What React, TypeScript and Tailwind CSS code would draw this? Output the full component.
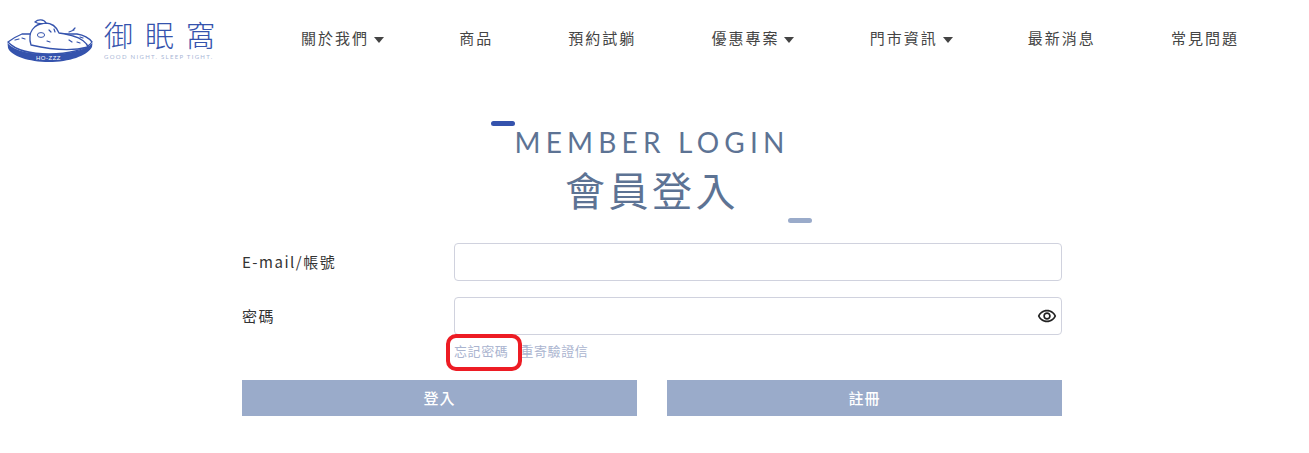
import React from "react";
import { MdOutlineRemoveRedEye } from "react-icons/md";

const font = "font-['Noto_Sans_CJK_TC','Noto_Sans',sans-serif]";

const NavItems = [
  { id: 1, title: "關於我們", caret: true },
  { id: 2, title: "商品", caret: false },
  { id: 3, title: "預約試躺", caret: false },
  { id: 4, title: "優惠專案", caret: true },
  { id: 5, title: "門市資訊", caret: true },
  { id: 6, title: "最新消息", caret: false },
  { id: 7, title: "常見問題", caret: false },
];

const Logo: React.FC = () => (
  <div className="flex items-start w-[207px] h-[48px]">
    <svg width="86" height="46" viewBox="0 0 86 46" fill="none" className="shrink-0">
      {/* bed */}
      <path d="M1 24 C5 21 10 18 15 16 L70 16 C76 17 82 20 85 24 C80 32 60 36 42 36 C24 36 8 32 1 24 Z" fill="#fff" stroke="#3553ad" strokeWidth="1.3" />
      <path d="M0.5 25 C8 34 26 36 42 36 C60 36 78 33 85.5 25 L85 29 C80 38 62 44 42 44 C22 44 4 38 1 30 Z" fill="#3553ad" />
      {/* pig */}
      <path d="M24 27 C20 14 27 6 38 5 C46 5 50 10 52 15 C60 16 64 18 66 18 C74 20 80 25 81 29 C66 33 46 32 24 27 Z" fill="#fff" stroke="#3553ad" strokeWidth="1.3" />
      <path d="M28 4 C31 1 37 1 39 5 C35 6 31 6 28 4 Z" fill="#fff" stroke="#3553ad" strokeWidth="1.2" />
      <ellipse cx="34" cy="17" rx="3.6" ry="2.4" stroke="#3553ad" strokeWidth="1" />
      <path d="M42 12 l2 2 M47 11 l1 3 M40 23 l3 1 M62 22 l3 2 M70 24 l3 1 M8 22 l4 -1 M15 20 l3 1 M73 19 l3 1 M62 14 l5 -2 M66 12 l2 -2" stroke="#3553ad" strokeWidth="1.2" strokeLinecap="round" />
      <text x="29" y="42" fontSize="6" fill="#fff" fontFamily="Liberation Sans" letterSpacing="0.5">HO-ZZZ</text>
    </svg>
    <div className="ml-[11px] flex flex-col">
      <span className={`${font} text-[29px] leading-[32px] text-[#3553ad] font-light tracking-[12px] whitespace-nowrap`}>御眠窩</span>
      <span className="font-['Lato',sans-serif] text-[6px] leading-[8px] text-[#a9b6d6] tracking-[1.3px] whitespace-nowrap mt-[3px]">GOOD NIGHT. SLEEP TIGHT.</span>
    </div>
  </div>
);

const Field: React.FC<{ label: string; eye?: boolean }> = ({ label, eye }) => (
  <div className="flex items-center h-[38px]">
    <label className={`${font} w-[212px] shrink-0 text-[15px] tracking-[1.5px] text-[#333]`}>{label}</label>
    <div className="relative flex-1 h-full">
      <input className="w-full h-full rounded border border-[#d0d2de] bg-white px-3 outline-none" />
      {eye && <MdOutlineRemoveRedEye className="absolute right-[5px] top-[9px] text-[#222]" size={20} />}
    </div>
  </div>
);

const App: React.FC = () => {
  return (
    <div className={`${font} w-[1309px] h-[453px] bg-white overflow-hidden`}>
      <header className="flex items-start pt-[18px] pl-[7px] h-[76px]">
        <Logo />
        <nav className="flex justify-between w-[938px] ml-[87px] mt-[9px]">
          {NavItems.map(({ id, title, caret }) => (
            <a key={id} href="#" className="flex items-center text-[15px] leading-[22px] tracking-[2px] text-[#444] whitespace-nowrap">
              {title}
              {caret && <span className="ml-[5px] mt-[4px] border-x-[5px] border-t-[6px] border-x-transparent border-t-[#444]" />}
            </a>
          ))}
        </nav>
      </header>

      <section className="relative flex flex-col items-center w-[820px] ml-[242px] mt-[49px]">
        <span className="absolute left-[249px] top-[-4px] w-[24px] h-[5px] rounded-full bg-[#3553ad]" />
        <h2 className="font-['Lato',sans-serif] text-[28px] leading-[34px] tracking-[5.2px] text-[#5d7394] whitespace-nowrap">MEMBER LOGIN</h2>
        <h1 className="text-[40px] leading-[50px] tracking-[3.5px] text-[#5d7394] mt-[5px]">會員登入</h1>
        <span className="absolute left-[546px] top-[93px] w-[24px] h-[5px] rounded-full bg-[#9aabca]" />
      </section>

      <form className="relative w-[820px] ml-[242px] mt-[29px]">
        <div className="flex flex-col gap-[16px]">
          <Field label="E-mail/帳號" />
          <Field label="密碼" eye />
        </div>
        <div className="flex gap-[12px] ml-[212px] mt-[5px] h-[22px] items-center text-[13px] tracking-[0.6px] text-[#aab4cf]">
          <a href="#">忘記密碼</a>
          <a href="#">重寄驗證信</a>
        </div>
        <span className="absolute left-[204px] top-[91px] w-[76px] h-[37px] rounded-[10px] border-[4px] border-[#ed1c24]" />
        <div className="flex gap-[30px] mt-[18px]">
          <button type="button" className="flex-1 h-[36px] bg-[#9aabca] text-white text-[15px] font-medium tracking-[1px]">登入</button>
          <button type="button" className="flex-1 h-[36px] bg-[#9aabca] text-white text-[15px] font-medium tracking-[1px]">註冊</button>
        </div>
      </form>
    </div>
  );
};

export default App;
